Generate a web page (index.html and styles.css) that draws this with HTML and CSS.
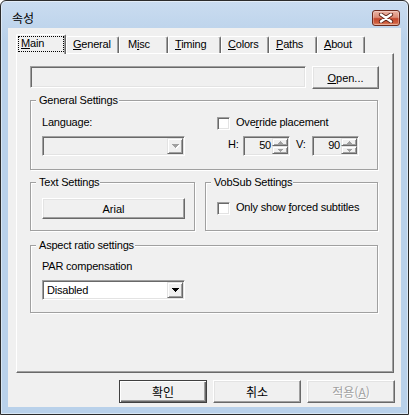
FILE: index.html
```html
<!DOCTYPE html>
<html lang="ko">
<head>
    <meta charset="UTF-8">
    <meta name="viewport" content="width=device-width, initial-scale=1.0">
    <title>속성</title>
    <link rel="stylesheet" href="styles.css">
</head>
<body>
    <div class="window">
        <!-- 제목 표시줄 -->
        <div class="titlebar">
            <span class="title">속성</span>
            <button class="close-btn" aria-label="닫기">
                <svg width="16" height="10" viewBox="0 0 16 10">
                    <path d="M3 1.5l10 7M13 1.5l-10 7" stroke="#5b2318" stroke-width="4.2" stroke-linecap="round"/>
                    <path d="M3 1.5l10 7M13 1.5l-10 7" stroke="#fff" stroke-width="2.4" stroke-linecap="round"/>
                </svg>
            </button>
        </div>

        <div class="client">
            <div class="tabs">
                <div class="tab tab-main selected"><span class="focus"><u>M</u>ain</span></div>
                <div class="tab tab-general"><u>G</u>eneral</div>
                <div class="tab tab-misc">M<u>i</u>sc</div>
                <div class="tab tab-timing"><u>T</u>iming</div>
                <div class="tab tab-colors"><u>C</u>olors</div>
                <div class="tab tab-paths"><u>P</u>aths</div>
                <div class="tab tab-about"><u>A</u>bout</div>
            </div>

            <div class="page">
                <div class="file-row">
                    <div class="edit file-edit"></div>
                    <button class="btn open-btn"><u>O</u>pen...</button>
                </div>

                <fieldset class="group general">
                    <legend>General Settings</legend>
                    <div class="general-body">
                        <div class="label">Language:</div>
                        <div class="check"><span class="box"></span><span>Ove<u>r</u>ride placement</span></div>
                        <div class="combo disabled">
                            <span class="combo-text"></span>
                            <span class="drop">
                                <svg class="arrow" width="7" height="4" viewBox="0 0 7 4"><path d="M0 0h7v1H0zM1 1h5v1H1zM2 2h3v1H2zM3 3h1v1H3z"/></svg>
                            </span>
                        </div>
                        <div class="pos-row">
                            <span class="pos-label pos-h">H:</span>
                            <div class="spin">
                                <span class="spin-val">50</span>
                                <span class="spin-btns">
                                    <span class="spin-btn"><svg width="5" height="3" viewBox="0 0 5 3"><path d="M2 0h1v1H2zM1 1h3v1H1zM0 2h5v1H0z"/></svg></span>
                                    <span class="spin-btn"><svg width="5" height="3" viewBox="0 0 5 3"><path d="M0 0h5v1H0zM1 1h3v1H1zM2 2h1v1H2z"/></svg></span>
                                </span>
                            </div>
                            <span class="pos-label pos-v">V:</span>
                            <div class="spin">
                                <span class="spin-val">90</span>
                                <span class="spin-btns">
                                    <span class="spin-btn"><svg width="5" height="3" viewBox="0 0 5 3"><path d="M2 0h1v1H2zM1 1h3v1H1zM0 2h5v1H0z"/></svg></span>
                                    <span class="spin-btn"><svg width="5" height="3" viewBox="0 0 5 3"><path d="M0 0h5v1H0zM1 1h3v1H1zM2 2h1v1H2z"/></svg></span>
                                </span>
                            </div>
                        </div>
                    </div>
                </fieldset>

                <div class="group-row">
                    <fieldset class="group text-group">
                        <legend>Text Settings</legend>
                        <div class="text-body">
                            <button class="btn font-btn">Arial</button>
                        </div>
                    </fieldset>
                    <fieldset class="group vobsub-group">
                        <legend>VobSub Settings</legend>
                        <div class="vobsub-body">
                            <div class="check"><span class="box"></span><span>Only show <u>f</u>orced subtitles</span></div>
                        </div>
                    </fieldset>
                </div>

                <fieldset class="group aspect">
                    <legend>Aspect ratio settings</legend>
                    <div class="aspect-body">
                        <div class="label">PAR compensation</div>
                        <div class="combo par-combo">
                            <span class="combo-text">Disabled</span>
                            <span class="drop">
                                <svg class="arrow" width="7" height="4" viewBox="0 0 7 4"><path d="M0 0h7v1H0zM1 1h5v1H1zM2 2h3v1H2zM3 3h1v1H3z"/></svg>
                            </span>
                        </div>
                    </div>
                </fieldset>
            </div>

            <!-- 하단 버튼 -->
            <div class="buttons">
                <button class="btn dlg-btn default">확인</button>
                <button class="btn dlg-btn">취소</button>
                <button class="btn dlg-btn" disabled>적용(<u>A</u>)</button>
            </div>
        </div>
    </div>
</body>
</html>
```

FILE: styles.css
```css
* {
    box-sizing: border-box;
}
body {
    margin: 0;
    font-family: "Liberation Sans", Arial, "Noto Sans CJK KR", sans-serif;
    font-size: 11px;
    letter-spacing: -0.2px;
    color: #000;
    background: #fff;
}

/* 창 프레임 */
.window {
    width: 409px;
    height: 415px;
    border: 1px solid #2b2b2b;
    border-radius: 6px 6px 0 0;
    background: linear-gradient(#cadcf0, #b9d1ea 40px);
    box-shadow: inset 0 0 0 1px rgba(255, 255, 255, 0.45);
    display: flex;
    flex-direction: column;
}
.titlebar {
    height: 27px;
    flex: none;
    display: flex;
    justify-content: space-between;
    align-items: flex-start;
    padding: 9px 8px 0 11px;
}
.title {
    font-family: "Noto Sans CJK KR", sans-serif;
    font-size: 12px;
    line-height: 16px;
    letter-spacing: 0;
}
.close-btn {
    width: 28px;
    height: 16px;
    margin: 0;
    padding: 0;
    border: 1px solid #6b2a1e;
    border-radius: 3px;
    background: linear-gradient(#ebb4a5, #dc8d78 45%, #c4482e 55%, #cf5f3f 85%, #e39677);
    box-shadow: inset 0 0 0 1px rgba(255, 255, 255, 0.3);
    display: flex;
    align-items: center;
    justify-content: center;
}
.client {
    flex: none;
    height: 379px;
    margin: 0 7px;
    background: #f0f0f0;
    padding: 6px 6px 4px 8px;
    display: flex;
    flex-direction: column;
}

/* 탭 */
.tabs {
    display: flex;
    align-items: flex-end;
    height: 19px;
    flex: none;
}
.tab {
    height: 17px;
    border-left: 1px solid #fff;
    border-top: 1px solid #fff;
    border-right: 1px solid #696969;
    border-radius: 2px 2px 0 0;
    box-shadow: inset -1px 0 0 #a0a0a0;
    padding: 1px 0 0 6px;
    line-height: 13px;
    white-space: nowrap;
}
.tab.selected {
    position: relative;
    z-index: 1;
    height: 20px;
    margin-bottom: -1px;
    padding: 1px 0 0 1px;
    background: #f0f0f0;
}
.focus {
    display: block;
    width: 46px;
    height: 16px;
    border: 1px dotted #000;
    padding-left: 2px;
    line-height: 13px;
}
.tab-main { width: 50px; }
.tab-general { width: 53px; }
.tab-misc { width: 49px; padding-left: 8px; }
.tab-timing { width: 53px; }
.tab-colors { width: 48px; }
.tab-paths { width: 48px; }
.tab-about { width: 48px; }

.page {
    width: 378px;
    height: 320px;
    flex: none;
    border: 1px solid;
    border-color: #fff #696969 #696969 #fff;
    box-shadow: inset -1px -1px 0 #a0a0a0;
    padding: 12px 0 0 13px;
}

/* 공통 컨트롤 */
.btn {
    font: inherit;
    margin: 0;
    padding: 0;
    color: #000;
    background: #f0f0f0;
    border: 1px solid;
    border-color: #fff #696969 #696969 #fff;
    box-shadow: inset -1px -1px 0 #a0a0a0, inset 1px 1px 0 #e3e3e3;
}
.btn:disabled {
    color: #a0a0a0;
    text-shadow: 1px 1px 0 #fff;
}
.btn.default {
    border-color: #404040;
    box-shadow: inset 1px 1px 0 #fff, inset -1px -1px 0 #696969, inset -2px -2px 0 #a0a0a0;
}
.edit,
.combo,
.spin,
.box {
    border: 1px solid;
    border-color: #a0a0a0 #fff #fff #a0a0a0;
    box-shadow: inset 1px 1px 0 #696969, inset -1px -1px 0 #e3e3e3;
}
.drop,
.spin-btn {
    border: 1px solid;
    border-color: #e3e3e3 #696969 #696969 #e3e3e3;
    box-shadow: inset 1px 1px 0 #fff, inset -1px -1px 0 #a0a0a0;
    background: #f0f0f0;
}

.file-row {
    display: flex;
    align-items: flex-start;
    gap: 6px;
}
.file-edit {
    width: 276px;
    height: 22px;
    background: #f0f0f0;
}
.open-btn {
    width: 67px;
    height: 23px;
}

/* 그룹 상자 */
.group {
    margin: 0;
    padding: 0;
    min-inline-size: 0;
    border: 1px solid #a0a0a0;
    box-shadow: inset 1px 1px 0 #fff, 1px 1px 0 #fff;
}
.group legend {
    margin-left: 5px;
    padding: 0 1px 0 3px;
    line-height: 13px;
    background: #f0f0f0;
}
.general {
    width: 348px;
    margin-top: 5px;
}
.general-body {
    padding: 9px 0 13px 11px;
    display: grid;
    grid-template-columns: 143px auto;
    grid-template-rows: 13px 20px;
    column-gap: 32px;
    row-gap: 7px;
}
.label {
    line-height: 13px;
}
.check {
    display: flex;
    align-items: flex-start;
    line-height: 13px;
    white-space: nowrap;
}
.box {
    flex: none;
    width: 13px;
    height: 13px;
    margin: 1px 6px 0 0;
    background: #fff;
}

.combo {
    display: flex;
    width: 143px;
    height: 20px;
    padding: 1px;
    background: #fff;
}
.combo.disabled {
    background: #f0f0f0;
}
.combo-text {
    flex: 1;
    padding-left: 3px;
    line-height: 16px;
}
.drop {
    width: 16px;
    height: 16px;
    display: flex;
    align-items: center;
    justify-content: center;
}
.arrow {
    fill: #000;
}
.disabled .arrow {
    fill: #a0a0a0;
    filter: drop-shadow(1px 1px 0 #fff);
}

.pos-row {
    display: flex;
    align-items: flex-start;
    margin-left: 11px;
}
.pos-label {
    padding-top: 2px;
    line-height: 13px;
}
.pos-h {
    width: 15px;
}
.pos-v {
    width: 16px;
    margin-left: 6px;
}
.spin {
    display: flex;
    width: 47px;
    height: 20px;
    padding: 1px;
    background: #f0f0f0;
}
.spin-val {
    flex: 1;
    text-align: right;
    padding-right: 1px;
    line-height: 15px;
}
.spin-btns {
    width: 16px;
    display: flex;
    flex-direction: column;
}
.spin-btn {
    height: 8px;
    display: flex;
    align-items: center;
    justify-content: center;
    fill: #a0a0a0;
}

.group-row {
    display: flex;
    gap: 10px;
    margin-top: 6px;
}
.text-group {
    width: 165px;
}
.text-body {
    padding: 9px 0 11px 11px;
}
.font-btn {
    width: 143px;
    height: 21px;
}
.vobsub-group {
    width: 173px;
}
.vobsub-body {
    padding: 12px 0 0 11px;
}

.aspect {
    width: 348px;
    margin-top: 8px;
}
.aspect-body {
    padding: 8px 0 12px 11px;
}
.par-combo {
    margin-top: 7px;
}

/* 하단 버튼 */
.buttons {
    display: flex;
    justify-content: flex-end;
    gap: 6px;
    margin-top: 7px;
}
.dlg-btn {
    width: 88px;
    height: 23px;
    font-family: "Noto Sans CJK KR", sans-serif;
    font-size: 12px;
    letter-spacing: 0;
    line-height: 16px;
}
```
